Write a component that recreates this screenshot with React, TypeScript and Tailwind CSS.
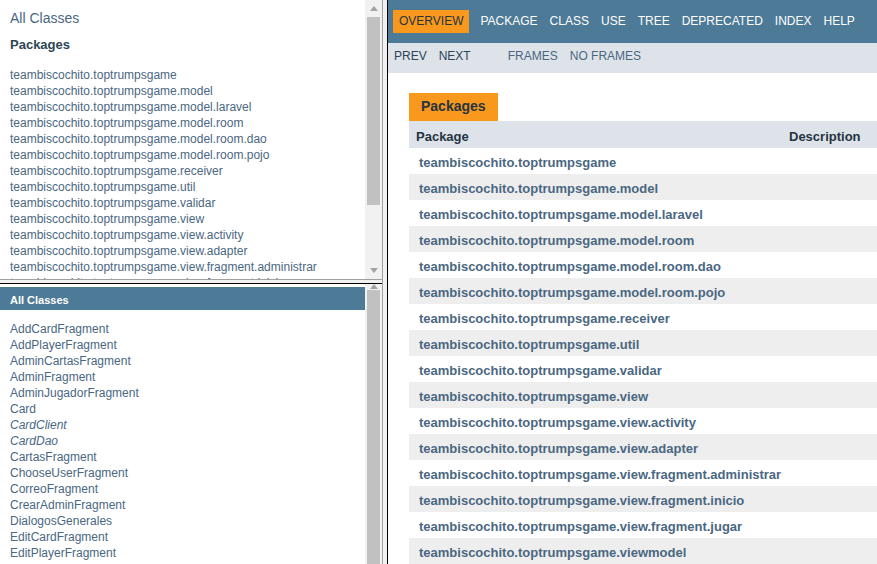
const packages = [
  'teambiscochito.toptrumpsgame',
  'teambiscochito.toptrumpsgame.model',
  'teambiscochito.toptrumpsgame.model.laravel',
  'teambiscochito.toptrumpsgame.model.room',
  'teambiscochito.toptrumpsgame.model.room.dao',
  'teambiscochito.toptrumpsgame.model.room.pojo',
  'teambiscochito.toptrumpsgame.receiver',
  'teambiscochito.toptrumpsgame.util',
  'teambiscochito.toptrumpsgame.validar',
  'teambiscochito.toptrumpsgame.view',
  'teambiscochito.toptrumpsgame.view.activity',
  'teambiscochito.toptrumpsgame.view.adapter',
  'teambiscochito.toptrumpsgame.view.fragment.administrar',
  'teambiscochito.toptrumpsgame.view.fragment.inicio',
  'teambiscochito.toptrumpsgame.view.fragment.jugar',
  'teambiscochito.toptrumpsgame.viewmodel',
]

const classes: { name: string; iface?: boolean }[] = [
  { name: 'AddCardFragment' },
  { name: 'AddPlayerFragment' },
  { name: 'AdminCartasFragment' },
  { name: 'AdminFragment' },
  { name: 'AdminJugadorFragment' },
  { name: 'Card' },
  { name: 'CardClient', iface: true },
  { name: 'CardDao', iface: true },
  { name: 'CartasFragment' },
  { name: 'ChooseUserFragment' },
  { name: 'CorreoFragment' },
  { name: 'CrearAdminFragment' },
  { name: 'DialogosGenerales' },
  { name: 'EditCardFragment' },
  { name: 'EditPlayerFragment' },
]

const topNav = ['Package', 'Class', 'Use', 'Tree', 'Deprecated', 'Index', 'Help']

function Arrow({ down }: { down?: boolean }) {
  return (
    <div className="h-[17px] flex items-center justify-center">
      <svg width="8" height="5" viewBox="0 0 8 5">
        <polygon points={down ? '0,0 8,0 4,5' : '0,5 8,5 4,0'} fill="#a3a3a3" />
      </svg>
    </div>
  )
}

function Scrollbar({ offset, thumb, showDown }: { offset: number; thumb: number; showDown?: boolean }) {
  return (
    <div className="w-[17px] shrink-0 bg-[#f1f1f1] flex flex-col overflow-hidden">
      <Arrow />
      <div className="shrink-0" style={{ height: offset }} />
      <div className="mx-[2px] shrink-0 bg-[#c1c1c1]" style={{ height: thumb }} />
      <div className="flex-1" />
      {showDown && <Arrow down />}
    </div>
  )
}

export default function App() {
  return (
    <div className="flex w-[877px] h-[564px] overflow-hidden bg-white font-['Liberation_Sans',Arial,sans-serif] text-[#353833]">
      {/* left frames */}
      <div className="w-[382px] shrink-0 flex flex-col">
        <div className="h-[279px] shrink-0 flex">
          <div className="flex-1 overflow-hidden pt-[10px] px-[10px]">
            <div className="text-[14px] leading-[16px] text-[#4A6782]">All Classes</div>
            <h2 className="mt-[11px] pb-[3px] text-[13px] leading-[15px] font-bold text-[#2c4557]">Packages</h2>
            <ul className="mt-[11px]">
              {packages.map((p) => (
                <li key={p} className="pt-[2px] text-[12px] leading-[14px] whitespace-nowrap text-[#4A6782]">
                  {p}
                </li>
              ))}
            </ul>
          </div>
          <Scrollbar offset={0} thumb={188} showDown />
        </div>
        <div className="h-[1px] bg-[#a0a0a0]" />
        <div className="h-[3px] bg-[#f0f0f0]" />
        <div className="h-[1px] bg-black" />
        <div className="flex-1 flex min-h-0">
          <div className="flex-1 overflow-hidden pt-[3px]">
            <h1 className="h-[23px] pt-[7px] pl-[10px] bg-[#4D7A97] text-white text-[11px] leading-[13px] font-bold">
              All Classes
            </h1>
            <ul className="mt-[10px] px-[10px]">
              {classes.map((c) => (
                <li
                  key={c.name}
                  className={`pt-[2px] text-[12px] leading-[14px] text-[#4A6782] ${c.iface ? 'italic' : ''}`}
                >
                  {c.name}
                </li>
              ))}
            </ul>
          </div>
          <Scrollbar offset={1} thumb={400} />
        </div>
      </div>

      {/* frame divider */}
      <div className="w-[1px] bg-[#a0a0a0]" />
      <div className="w-[4px] bg-[#f0f0f0]" />
      <div className="w-[1px] bg-black" />

      {/* right frame */}
      <div className="flex-1 overflow-hidden">
        <div className="h-[43px] pt-[10px] bg-[#4D7A97] text-[12px] leading-[13px] uppercase">
          <ul className="flex">
            <li className="mx-[5px] px-[6px] py-[5px] bg-[#F8981D] text-[#253441]">Overview</li>
            {topNav.map((n) => (
              <li key={n} className="px-[6px] py-[5px] text-white">
                {n}
              </li>
            ))}
          </ul>
        </div>
        <div className="h-[30px] bg-[#dee3e9] text-[12px] leading-[14px] uppercase flex">
          <ul className="flex">
            <li className="px-[6px] pt-[6px] pb-[4px] text-[#2c4557]">Prev</li>
            <li className="px-[6px] pt-[6px] pb-[4px] text-[#2c4557]">Next</li>
          </ul>
          <ul className="flex ml-[25px]">
            <li className="px-[6px] pt-[6px] pb-[4px] text-[#4A6782]">Frames</li>
            <li className="px-[6px] pt-[6px] pb-[4px] text-[#4A6782]">No Frames</li>
          </ul>
        </div>

        <div className="pt-[20px] pl-[21px]">
          <div className="inline-block h-[28px] px-[12px] pt-[5px] bg-[#F8981D] text-[#253441] text-[14px] leading-[16px] font-bold">
            Packages
          </div>
          <div className="w-[520px]">
            <div className="flex h-[27px] pt-[8px] bg-[#dee3e9] text-[#253441] text-[13px] leading-[16px] font-bold">
              <div className="w-[373px] pl-[7px]">Package</div>
              <div className="pl-[7px]">Description</div>
            </div>
            {packages.map((p, i) => (
              <div
                key={p}
                className={`h-[26px] pt-[7px] pl-[10px] text-[13px] leading-[15px] font-bold text-[#4A6782] whitespace-nowrap ${
                  i % 2 === 0 ? 'bg-white' : 'bg-[#eeeeee]'
                }`}
              >
                {p}
              </div>
            ))}
          </div>
        </div>
      </div>
    </div>
  )
}
